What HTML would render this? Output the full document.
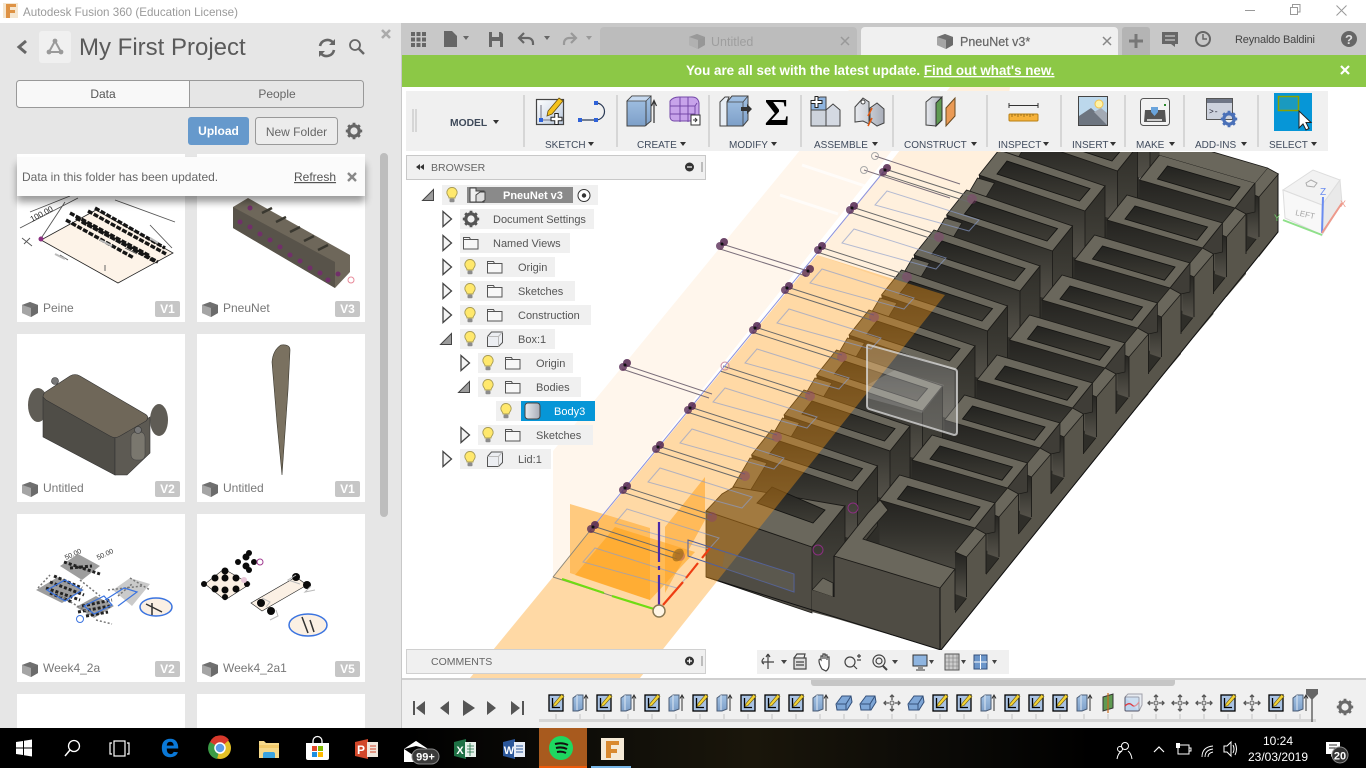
<!DOCTYPE html>
<html lang="en"><head><meta charset="utf-8"><title>Autodesk Fusion 360</title>
<style>
html,body{margin:0;padding:0;background:#fff;width:1366px;height:768px;overflow:hidden}
svg{display:block;font-family:"Liberation Sans",Arial,sans-serif}
text{white-space:pre}
</style></head><body>
<svg xmlns="http://www.w3.org/2000/svg" width="1366" height="768" viewBox="0 0 1366 768">
<defs>
<linearGradient id="fg" x1="0" y1="0" x2="0" y2="1"><stop offset="0" stop-color="#242320"/><stop offset=".35" stop-color="#33322d"/><stop offset=".7" stop-color="#47453e"/><stop offset="1" stop-color="#55524a"/></linearGradient>
<linearGradient id="hg" x1="0" y1="0" x2="0" y2="1"><stop offset="0" stop-color="#232320"/><stop offset="1" stop-color="#3e3c35"/></linearGradient>
<linearGradient id="eg" x1="0" y1="0" x2="0" y2="1"><stop offset="0" stop-color="#2f2e29"/><stop offset="1" stop-color="#4a4840"/></linearGradient>
<linearGradient id="tb" x1="0" y1="0" x2="1" y2="0"><stop offset="0" stop-color="#000"/><stop offset=".3" stop-color="#000"/><stop offset=".42" stop-color="#0d0c08"/><stop offset=".55" stop-color="#1a160b"/><stop offset=".7" stop-color="#0a0906"/><stop offset=".8" stop-color="#000"/></linearGradient>
<linearGradient id="sk" x1="0" y1="0" x2="1" y2="1"><stop offset="0" stop-color="#fff"/><stop offset="1" stop-color="#b9c8dd"/></linearGradient>
<linearGradient id="bx" x1="0" y1="0" x2="0" y2="1"><stop offset="0" stop-color="#a3c2e4"/><stop offset="1" stop-color="#7d9fc8"/></linearGradient>
<linearGradient id="gr" x1="0" y1="0" x2="1" y2="0"><stop offset="0" stop-color="#e8eaee"/><stop offset="1" stop-color="#a8adb8"/></linearGradient>

<!-- left column ring -->
<g id="L">
<polygon points="13,-16 119,20 119,70 13,34" fill="url(#fg)"/>
<polygon points="-5.5,16 11,21 11,60 -5.5,55" fill="url(#fg)" stroke="#1c1b18" stroke-width=".8"/>
<polygon points="119,20 139,-5 139,55 119,80" fill="url(#eg)" stroke="#1c1b18" stroke-width=".8"/>
<polygon points="-5.5,16 11.5,-13 28.5,-8 11,21" fill="#6a675c" stroke="#1c1b18" stroke-width=".8"/>
<polygon points="13,-16 33,-41 139,-5 119,20" fill="#6a675c" stroke="#1c1b18" stroke-width=".9"/>
<polygon points="31,-17 41,-30 124,-2.4 113.5,10" fill="url(#hg)" stroke="#141412" stroke-width=".9"/>
</g>
<!-- right column ring -->
<g id="R">
<polygon points="13,-16 108.5,12 88.5,36 88.5,75 13,40" fill="url(#fg)"/>
<polygon points="88.5,36 100,41 100,82 88.5,78" fill="url(#fg)"/>
<polygon points="108.5,12 128.5,-13 128.5,16 119.5,18" fill="#3f3d37" stroke="#1c1b18" stroke-width=".7"/>
<polygon points="100,41 119.5,18 119.5,78 100,101" fill="#58554b"/>
<path d="M100,41V81M119.5,18V58" stroke="#1c1b18" stroke-width=".9" fill="none"/>
<polygon points="13,-16 33,-41 128.5,-13 108.5,12" fill="#6a675c" stroke="#1c1b18" stroke-width=".9"/>
<polygon points="31,-17 41,-30 113.5,-9 103,4.2" fill="url(#hg)" stroke="#141412" stroke-width=".9"/>
<polygon points="108.5,12 119.5,18 100,41 88.5,36" fill="#6a675c" stroke="#1c1b18" stroke-width=".8"/>
</g>
<!-- sketch repeat -->
<g id="S" fill="none">
<line x1="0" y1="-1" x2="87" y2="27" stroke="#6a6a6a" stroke-width="1"/>
<line x1="-3" y1="4" x2="84" y2="32" stroke="#6a6a6a" stroke-width="1"/>
<polygon points="-10,35 2,21 94,50 84,61" stroke="#8a9ccc" stroke-opacity=".65" stroke-width="1"/>
<circle cx="87" cy="29" r="5" fill="#8b3f78" opacity=".4"/>
</g>
<g id="D"><circle cx="2" cy="-2" r="4" fill="#52264f" opacity=".85"/><circle cx="-2" cy="2" r="4" fill="#5a2e58" opacity=".8"/><circle r="1.5" fill="#111"/></g>

<!-- bulb -->
<g id="bulb"><path d="M0-7.5a5 5 0 0 1 4.7 7c-.8 1.6-1.7 2-1.7 3.5h-6c0-1.5-.9-1.9-1.7-3.5A5 5 0 0 1 0-7.5z" fill="#ffe86c" stroke="#a89c55" stroke-width=".9"/><rect x="-2.5" y="3.6" width="5" height="3.6" rx="1" fill="#8c8c8c"/></g>
<!-- folder -->
<g id="fo"><path d="M-7.5-5.5h6l1 2h7.5v9.5h-14.5z" fill="#f7f7f7" stroke="#555" stroke-width="1"/><path d="M-7.5-3.5h15" stroke="#555" stroke-width="1" fill="none"/></g>
<!-- tree triangles -->
<polygon id="tr" points="-4,-7.5 4.5,0 -4,7.5" fill="#f4f4f4" stroke="#444" stroke-width="1.3"/>
<polygon id="td" points="5.5,-5.5 5.5,5.5 -5.5,5.5" fill="#9c9c9c" stroke="#444" stroke-width="1"/>
<!-- component cube -->
<g id="cu"><path d="M-7.5-2.5L-3.5-7H7.5V3.5L3.5 7.5H-7.5z" fill="#eceef2" stroke="#555"/><path d="M3.5 7.5V-2.5L7.5-7M3.5-2.5H-7.5" stroke="#bbb" fill="none"/></g>
<!-- doc cube -->
<g id="dc"><polygon points="-8,-4 0,-7 8,-4 8,4 1,8 -8,4" fill="#8a8a8a"/><polygon points="-8,-4 0,-7 8,-4 1,-1" fill="#6f6f6f"/><polygon points="1,-1 8,-4 8,4 1,8" fill="#6b6b6b"/><polygon points="-8,-4 1,-1 1,8 -8,4" fill="#a5a5a5"/></g>
<!-- timeline icons -->
<g id="ts"><rect x="-7" y="-8" width="14" height="16" fill="#a9c2e2" stroke="#000" stroke-width="1.3"/><path d="M-3.5-5V4.5H4" fill="none" stroke="#000" stroke-width="1.3"/><path d="M5.5-8.5L8-6.5 0 2.5l-3 1 1-3z" fill="#f4d335" stroke="#6a5a10" stroke-width=".6"/></g>
<g id="te"><polygon points="-7,-5 -3,-8 3,-8 3,6 -2,8 -7,8" fill="url(#bx)" stroke="#4c5d75"/><path d="M-3-8V7" stroke="#dfe8f3" fill="none"/><path d="M6 8V-7M4-4.5L6-8l2 3.5" fill="none" stroke="#333"/></g>
<g id="tf"><path d="M-8 1L-2-7H7L8-1 3 7H-7z" fill="#7ea6d6" stroke="#34507a"/><path d="M-7 1H2L7-7M2 1V7" fill="none" stroke="#34507a"/></g>
<g id="tm" fill="none" stroke="#555" stroke-width="1.3"><path d="M0-8V-3M-2-6L0-8l2 2M0 8V3M-2 6L0 8l2-2M-8 0H-3M-6-2L-8 0l2 2M8 0H3M6-2L8 0 6 2"/><circle r="2" fill="#ddd" stroke="#777"/></g>
<!-- badge -->
<g id="ba"><rect x="0" y="0" width="25" height="16" rx="2" fill="#c6c6c6"/></g>
<!-- gear -->
<g id="gear"><circle r="5.2" fill="none" stroke="currentColor" stroke-width="3.2"/><g stroke="currentColor" stroke-width="2.8"><path d="M0-8.2V-5.5M0 8.2V5.5M-8.2 0H-5.5M8.2 0H5.5M-5.8-5.8L-4-4M5.8 5.8L4 4M-5.8 5.8L-4 4M5.8-5.8L4-4"/></g></g>
<clipPath id="scene"><rect x="402" y="87" width="964" height="592"/></clipPath>
<clipPath id="model"><rect x="402" y="152" width="964" height="527"/></clipPath>
<clipPath id="cards"><rect x="0" y="150" width="380" height="578"/></clipPath>
</defs>

<!-- ====== window backgrounds ====== -->
<rect width="1366" height="768" fill="#fff"/>

<!-- ====== 3D scene ====== -->
<g clip-path="url(#scene)">
<polygon points="553,451 792,160 849,90 940,90 553,577" fill="#fff6ec"/>
<polygon points="817,255 897,283 1000,155 1010,87 950,87" fill="#fff0dd"/>
<g stroke="#fff" stroke-width="3" opacity=".7"><path d="M802,165L865,186M780,195L838,214"/></g>

<!-- model -->
<g clip-path="url(#model)">
<polygon points="706,511 732,500 1057,100 1150,150 1139,180 1160,152 1172,140 1267,168 1278,174 1278,232 941,650 706,577" fill="#2f2e29"/>
<use href="#L" x="1031" y="111"/><use href="#L" x="998.5" y="151"/><use href="#L" x="966" y="191"/><use href="#L" x="933.5" y="231"/><use href="#L" x="901" y="271"/><use href="#L" x="868.5" y="311"/><use href="#L" x="836" y="351"/><use href="#L" x="803.5" y="391"/><use href="#L" x="771" y="431"/><use href="#L" x="738.5" y="471"/>
<!-- left front block -->
<polygon points="812,547 845,506 845,578 833,597 812,590" fill="url(#eg)" stroke="#1c1b18" stroke-width=".8"/>
<polygon points="812,590 823,578 833,583 833,597" fill="#6a675c" stroke="#1c1b18" stroke-width=".7"/>
<polygon points="706,511 812,547 812,613 706,577" fill="#4f4c44" stroke="#1c1b18" stroke-width=".8"/>
<polygon points="706,511 722,494 734,487 845,506 812,547" fill="#6a675c" stroke="#1c1b18" stroke-width=".9"/>
<polygon points="757,503 772,487 825,510 813,523" fill="url(#hg)" stroke="#141412" stroke-width=".9"/>

<!-- right col -->
<polygon points="958,560 1278,174 1278,232 941,650" fill="#2f2e29"/>
<polygon points="941,650 1278,232 1278,212 941,630" fill="#58554b" stroke="#1c1b18" stroke-width=".8"/>
<!-- last (back) tab -->
<polygon points="1247.5,192 1259,197 1259,240 1247.5,236" fill="url(#fg)"/>
<polygon points="1259,197 1278.5,174 1278.5,232 1259,257" fill="#58554b"/>
<path d="M1259,197V237M1278,174V232" stroke="#1c1b18" stroke-width=".9" fill="none"/>
<polygon points="1267.5,168 1278.5,174 1259,197 1247.5,192" fill="#6a675c" stroke="#1c1b18" stroke-width=".8"/>
<use href="#R" x="1126.5" y="196"/>
<polygon points="1159.5,155 1255,183 1267.5,168 1172,140 1160,140" fill="#6a675c"/>
<path d="M1267.5,168L1172,140" stroke="#1c1b18" stroke-width=".9" fill="none"/>
<use href="#R" x="1094" y="236"/><use href="#R" x="1061.5" y="276"/><use href="#R" x="1029" y="316"/><use href="#R" x="996.5" y="356"/><use href="#R" x="964" y="396"/><use href="#R" x="931.5" y="436"/><use href="#R" x="899" y="476"/><use href="#R" x="866.5" y="516"/>
<!-- right front block -->
<polygon points="940,588 955,569 955,630 941,650" fill="#58554b"/>
<path d="M955,569V610" stroke="#1c1b18" stroke-width=".9"/>
<polygon points="834,556 940,588 941,650 834,618" fill="#4f4c44"/>
<polygon points="812,590 834,597 834,618 812,612" fill="#4f4c44"/>
<polygon points="834,556 868,513 880,500 888,510 873,527 863,539 955,569 940,588" fill="#6a675c" stroke="#1c1b18" stroke-width=".9"/>
<path d="M834,556V597M940,588V650M706,577L941,650L1278,232V174" fill="none" stroke="#111" stroke-width="1"/>
</g>

<!-- orange plane -->
<polygon points="817,255 945,295 640,678 470,678 553,577" fill="#ff9c12" opacity=".38"/>
<polygon points="570,504 650,528 650,600 570,573" fill="#ffa526" opacity=".55"/>
<polygon points="575,575 615,527 695,552 650,600" fill="#ffa010" opacity=".55"/>
<polygon points="665,527 705,477 705,520 665,593" fill="#ffa526" opacity=".6"/>

<!-- sketch lines -->
<use href="#S" x="593" y="527"/><use href="#S" x="625" y="488"/><use href="#S" x="658" y="447"/><use href="#S" x="690" y="408"/><use href="#S" x="723" y="367"/><use href="#S" x="755" y="328"/><use href="#S" x="787" y="288"/><use href="#S" x="820" y="248"/><use href="#S" x="852" y="208"/><use href="#S" x="885" y="170"/>
<path d="M553,577L593,527" stroke="#8b8678" stroke-width="1" fill="none"/>
<path d="M593,527L885,170" stroke="#8a90dc" stroke-width="1" fill="none"/>
<path d="M553,577L659,611" stroke="#8b8678" stroke-width="1" fill="none"/>
<path d="M625,365L712,394M622,369L709,398M722,244L808,271M720,249L806,276M875,156L960,184M864,170L950,198" stroke="#7b6f7b" stroke-width="1" fill="none"/>
<use href="#D" x="593" y="527"/><use href="#D" x="625" y="488"/><use href="#D" x="658" y="447"/><use href="#D" x="690" y="408"/><use href="#D" x="755" y="328"/><use href="#D" x="787" y="288"/><use href="#D" x="820" y="248"/><use href="#D" x="852" y="208"/><use href="#D" x="885" y="170"/><use href="#D" x="625" y="365"/><use href="#D" x="722" y="244"/><use href="#D" x="808" y="271"/>
<circle cx="725" cy="366" r="4" fill="none" stroke="#c98aa2"/>
<circle cx="875" cy="156" r="3.5" fill="none" stroke="#aaa"/><circle cx="864" cy="170" r="3.5" fill="none" stroke="#aaa"/>
<circle cx="853" cy="508" r="5" fill="none" stroke="#8b2f80"/><circle cx="818" cy="550" r="5" fill="none" stroke="#8b2f80"/>
<polygon points="688,540 794,574 794,592 688,556" fill="none" stroke="#4f5fa0"/>
<polygon points="725,552 794,574 794,592 722,568" fill="#736f62" opacity=".35"/>
<ellipse cx="678" cy="555" rx="5" ry="7" fill="#a8701c" opacity=".8" transform="rotate(35 678 555)"/>

<!-- axes -->
<path d="M562,579L604,593" stroke="#6fdc12" stroke-width="2.2"/><path d="M612,596L654,609" stroke="#6fdc12" stroke-width="2.2"/>
<path d="M659,522V562M659,566V570M659,575V605" stroke="#4a2aa8" stroke-width="2.2"/>
<path d="M663,605L683,582M686,578L698,563M702,558L710,548" stroke="#ee3d12" stroke-width="2.2"/>
<circle cx="659" cy="611" r="6" fill="#fff6e6" stroke="#8a7a55" stroke-width="1.5"/>

<!-- selected body highlight -->
<path d="M869,345L955,369q2,1 2,3V432q0,3-3,3L869,409q-2-1-2-3V347q0-3 2-2z" fill="#fff" fill-opacity=".2" stroke="#ddd" stroke-opacity=".75" stroke-width="2"/>
<polygon points="867,398 922,413 944,385 895,370 867,385" fill="#fff" opacity=".15"/>

<!-- view cube -->
<polygon points="1283,190 1313,170 1340,180 1322,205" fill="#f2f2f2" stroke="#ddd"/>
<polygon points="1283,190 1322,205 1322,235 1285,218" fill="#f8f8f8" stroke="#ddd"/>
<polygon points="1322,205 1340,180 1342,203 1322,235" fill="#e9e9e9" stroke="#ddd"/>
<text x="1295" y="215" font-size="8" fill="#a5a5a5" transform="rotate(12 1295 215)">LEFT</text>
<path d="M1306,183l5-3 6,3-3,4-7-1z" fill="none" stroke="#aaa"/>
<path d="M1323,197L1322,233" stroke="#6a8cf0" stroke-width="2"/><path d="M1322,233L1342,203" stroke="#ee9a8c" stroke-width="2"/><path d="M1322,235L1283,220" stroke="#8fe08a" stroke-width="2"/>
<text x="1320" y="195" font-size="10" fill="#6a8cf0">Z</text><text x="1340" y="207" font-size="9" fill="#ee9a8c">X</text><text x="1274" y="221" font-size="9" fill="#6fd06a">Y</text>
</g>

<!-- ====== left panel ====== -->
<rect x="0" y="23" width="401" height="705" fill="#e6e6e6"/>
<rect x="401" y="23" width="1" height="705" fill="#c8c8c8"/>
<path d="M26,41l-7,6 7,6" fill="none" stroke="#666" stroke-width="3"/>
<rect x="39" y="31" width="32" height="32" rx="3" fill="#f0f0f0"/>
<path d="M55,41l-6,11h12z" fill="none" stroke="#9a9a9a" stroke-width="2"/><circle cx="55" cy="41" r="2.4" fill="#9a9a9a"/><circle cx="49" cy="52" r="2.4" fill="#9a9a9a"/><circle cx="61" cy="52" r="2.4" fill="#9a9a9a"/>
<text x="79" y="55" font-size="24" fill="#5a5a5a">My First Project</text>
<path d="M320,46a7.5 7.5 0 0 1 13-3.5M334,50a7.5 7.5 0 0 1-13 3.5" fill="none" stroke="#666" stroke-width="2.6"/><path d="M335,39v6h-6zM319,57v-6h6z" fill="#666"/>
<circle cx="355" cy="45" r="5" fill="none" stroke="#666" stroke-width="1.8"/><path d="M359,49l5,5" stroke="#666" stroke-width="2.4"/>
<path d="M382,30l8,8M390,30l-8,8" stroke="#ababab" stroke-width="2.6"/>

<rect x="16.500" y="80.500" width="347" height="27" rx="3" fill="#e6e6e6" stroke="#999"/>
<path d="M189.500,81H20a3 3 0 0 0-3 3V104a3 3 0 0 0 3 3H189.500z" fill="#f8f8f8" stroke="none"/>
<path d="M189.500,80.500V107.500" stroke="#999"/>
<text x="103" y="98" font-size="12" fill="#555" text-anchor="middle">Data</text>
<text x="277" y="98" font-size="12" fill="#666" text-anchor="middle">People</text>
<rect x="188" y="117" width="61" height="28" rx="3" fill="#6699cc"/>
<text x="218.500" y="135" font-size="12" font-weight="bold" fill="#fff" text-anchor="middle">Upload</text>
<rect x="255.500" y="117.500" width="82" height="27" rx="3" fill="#ececec" stroke="#999"/>
<text x="296.500" y="136" font-size="12" fill="#666" text-anchor="middle">New Folder</text>
<use href="#gear" x="354" y="131" color="#666"/>

<!-- cards -->
<g clip-path="url(#cards)">
<rect x="17" y="154" width="168" height="168" fill="#fff"/><rect x="197" y="154" width="168" height="168" fill="#fff"/>
<rect x="17" y="334" width="168" height="168" fill="#fff"/><rect x="197" y="334" width="168" height="168" fill="#fff"/>
<rect x="17" y="514" width="168" height="168" fill="#fff"/><rect x="197" y="514" width="168" height="168" fill="#fff"/>
<rect x="17" y="694" width="168" height="40" fill="#fff"/><rect x="197" y="694" width="168" height="40" fill="#fff"/>

<!-- Peine thumb -->
<polygon points="41,240 118,283 173,253 96,210" fill="#fdf3e8" stroke="#222" stroke-width=".8"/>
<g stroke="#151515" stroke-width="3.4" stroke-dasharray="5 1.5" fill="none"><path d="M70,213L150,256M76,218L156,262M82,222L158,262M66,220L134,258M88,211L166,254M95,208L165,248"/></g>
<g stroke="#555" stroke-width=".9" fill="none"><path d="M20,228L78,198M40,240L65,202M30,212L70,196M115,200L175,222M150,225L172,248"/><path d="M22,238l10,8M24,244l6-6M60,255l8,5M105,265v6M125,248l12,6"/></g>
<g stroke="#bbb" stroke-width="2" fill="none"><path d="M55,254l10,5M100,240l12,6M150,238l8,5"/></g>
<circle cx="41" cy="239" r="2.5" fill="#8b2f80"/>
<text x="32" y="222" font-size="8" fill="#222" transform="rotate(-28 32 222)">100.00</text>
<!-- PneuNet thumb -->
<polygon points="233,207 248,198 350,255 350,272 335,288 233,228" fill="#6e675a"/>
<polygon points="233,207 335,262 335,288 233,228" fill="#58534a"/>
<g fill="#71306a"><circle cx="240" cy="222" r="2.5"/><circle cx="250" cy="227" r="2.5"/><circle cx="260" cy="234" r="2.5"/><circle cx="270" cy="240" r="2.5"/><circle cx="280" cy="247" r="2.5"/><circle cx="290" cy="255" r="2.5"/><circle cx="300" cy="261" r="2.5"/><circle cx="310" cy="268" r="2.5"/><circle cx="320" cy="273" r="2.5"/><circle cx="328" cy="280" r="2.5"/><circle cx="338" cy="274" r="2.5"/><circle cx="250" cy="208" r="2.5"/></g>
<g stroke="#3a3830" stroke-width="2.5"><path d="M262,213l10-5M276,222l10-5M290,232l10-5M304,241l10-5M318,250l10-5"/></g>
<circle cx="351" cy="280" r="3" fill="none" stroke="#e88a9a"/>
<!-- Untitled box -->
<ellipse cx="38" cy="405" rx="10" ry="17" fill="#5f5c55"/><ellipse cx="159" cy="420" rx="9" ry="16" fill="#5f5c55"/>
<polygon points="43,397 115,438 115,475 43,437" fill="#4f4d47" stroke="#333" stroke-width=".6"/>
<polygon points="115,438 150,417 150,453 127,475 115,475" fill="#5d5a53" stroke="#333" stroke-width=".6"/>
<path d="M43,397Q43,393 47,391L70,376Q75,373 80,376L145,414Q150,417 146,421L120,436Q115,439 110,436L46,400z" fill="#6f6759" stroke="#333" stroke-width=".6"/>
<rect x="131" y="432" width="14" height="28" rx="5" fill="#7a776e" stroke="#444" stroke-width=".6"/>
<circle cx="55" cy="381" r="3.500" fill="#777" stroke="#333" stroke-width=".6"/><circle cx="138" cy="430" r="3.500" fill="#777" stroke="#333" stroke-width=".6"/>
<!-- blade -->
<path d="M281,345Q290,344 290,350L288,390L282,475L277,423L272,362Q273,350 281,345z" fill="#7a7160" stroke="#3a382f" stroke-width=".6"/>
<!-- Week4_2a -->
<g fill="#7d7d7d" opacity=".75"><polygon points="36,590 58,577 84,590 62,603"/><polygon points="60,566 78,554 100,566 82,580"/><polygon points="76,607 96,596 114,606 94,618"/><polygon points="113,590 130,578 150,584 132,606" opacity=".55"/></g>
<g fill="none">
<g stroke="#222" stroke-width="3" stroke-dasharray="3 2"><path d="M46,588L80,600M50,582L84,595M54,576L82,588M50,593L72,602M78,612L110,606M82,606L112,600M86,616L108,612M64,562L100,574M70,568L92,566"/></g>
<g stroke="#777" stroke-width="1.5" stroke-dasharray="2 2"><path d="M38,588L50,575M60,596L88,612M80,580L100,596M130,578L150,590M108,590L142,586M118,596L132,584M96,620L112,624"/></g>
<path d="M47,590L65,580 82,590 65,601zM84,606L104,596 112,605 94,614zM105,600L124,588 137,592 118,606" stroke="#3b74e0" stroke-width="1.2"/>
</g>
<text x="66" y="560" font-size="7" fill="#333" transform="rotate(-25 66 560)">50.00</text><text x="98" y="560" font-size="7" fill="#333" transform="rotate(-25 98 560)">50.00</text>
<ellipse cx="156" cy="607" rx="16" ry="9" fill="#fbf0e4" stroke="#3b74e0" stroke-width="1.500"/><path d="M146,604l16,8M152,603l0,12" stroke="#333" stroke-width="1.500"/>
<circle cx="80" cy="619" r="3.500" fill="none" stroke="#3b74e0"/>
<!-- Week4_2a1 -->
<polygon points="205,584 224,569 250,584 225,600" fill="#fbf0e4" stroke="#222" stroke-width=".6"/>
<polygon points="251,603 296,577 307,585 262,611" fill="#fbf0e4" stroke="#222" stroke-width=".6"/>
<g fill="#0a0a0a"><circle cx="204" cy="584" r="3"/><circle cx="215" cy="578" r="3.500"/><circle cx="215" cy="589" r="3.500"/><circle cx="225" cy="571" r="3.500"/><circle cx="225" cy="578" r="3.500"/><circle cx="236" cy="578" r="3.500"/><circle cx="236" cy="589" r="3.500"/><circle cx="225" cy="590" r="3.500"/><circle cx="225" cy="597" r="3"/><circle cx="247" cy="584" r="3"/><circle cx="238" cy="562" r="3"/><circle cx="246" cy="557" r="3.500"/><circle cx="246" cy="566" r="3.500"/><circle cx="254" cy="562" r="3"/><circle cx="249" cy="553" r="3"/><circle cx="249" cy="570" r="3"/><circle cx="261" cy="603" r="4"/><circle cx="271" cy="611" r="4"/><circle cx="296" cy="577" r="4"/><circle cx="307" cy="585" r="4"/></g>
<circle cx="260" cy="562" r="3" fill="none" stroke="#a03a90"/><circle cx="244" cy="580" r="3" fill="#e8c6d8"/>
<ellipse cx="308" cy="625" rx="19" ry="11" fill="#fbf0e4" stroke="#3b74e0" stroke-width="1.500"/><path d="M302,617l6,16M310,620l4,12" stroke="#333" stroke-width="1.500"/>
<g stroke="#bbb" fill="none" stroke-width="1"><path d="M300,584l-12-4 8-5M315,590l-10 2 6-6M270,620l8-4-2-6M262,598l8,4-4,5"/></g>

<!-- card labels -->
<use href="#dc" x="30" y="309"/><text x="43" y="312" font-size="12" fill="#777">Peine</text><use href="#ba" x="155" y="301"/><text x="167.500" y="313" font-size="12" font-weight="bold" fill="#fff" text-anchor="middle">V1</text>
<use href="#dc" x="210" y="309"/><text x="223" y="312" font-size="12" fill="#777">PneuNet</text><use href="#ba" x="335" y="301"/><text x="347.500" y="313" font-size="12" font-weight="bold" fill="#fff" text-anchor="middle">V3</text>
<use href="#dc" x="30" y="489"/><text x="43" y="492" font-size="12" fill="#777">Untitled</text><use href="#ba" x="155" y="481"/><text x="167.500" y="493" font-size="12" font-weight="bold" fill="#fff" text-anchor="middle">V2</text>
<use href="#dc" x="210" y="489"/><text x="223" y="492" font-size="12" fill="#777">Untitled</text><use href="#ba" x="335" y="481"/><text x="347.500" y="493" font-size="12" font-weight="bold" fill="#fff" text-anchor="middle">V1</text>
<use href="#dc" x="30" y="669"/><text x="43" y="672" font-size="12" fill="#777">Week4_2a</text><use href="#ba" x="155" y="661"/><text x="167.500" y="673" font-size="12" font-weight="bold" fill="#fff" text-anchor="middle">V2</text>
<use href="#dc" x="210" y="669"/><text x="223" y="672" font-size="12" fill="#777">Week4_2a1</text><use href="#ba" x="335" y="661"/><text x="347.500" y="673" font-size="12" font-weight="bold" fill="#fff" text-anchor="middle">V5</text>
</g>
<rect x="380" y="153" width="8" height="364" rx="4" fill="#bdbdbd"/>

<!-- notification -->
<rect x="17" y="164" width="348" height="38" fill="#000" opacity=".4" style="filter:blur(4px)"/>
<rect x="17" y="157" width="348" height="39" fill="#fbfbfb"/>
<text x="22" y="181" font-size="12" fill="#666">Data in this folder has been updated.</text>
<text x="294" y="181" font-size="12" fill="#555" text-decoration="underline">Refresh</text>
<path d="M348,173l8,8M356,173l-8,8" stroke="#888" stroke-width="2.400"/>

<!-- ====== title bar ====== -->
<rect x="0" y="0" width="1366" height="23" fill="#fff"/>
<rect x="3" y="3" width="15" height="15" fill="#f5e6cf"/>
<path d="M6,4h10v3h-6v3h5v3h-5v5h-4z" fill="#d9822b" opacity=".85"/>
<text x="23" y="16" font-size="12" fill="#9a9a9a" textLength="215" lengthAdjust="spacingAndGlyphs">Autodesk Fusion 360 (Education License)</text>
<path d="M1245,10.500h10" stroke="#999"/>
<rect x="1290.500" y="7.500" width="7" height="7" fill="#fff" stroke="#999"/><path d="M1292.500,7V4.500H1300V12H1298" fill="none" stroke="#999"/>
<path d="M1336.500,5.500l10,10M1346.500,5.500l-10,10" stroke="#999"/>

<!-- ====== tab bar ====== -->
<rect x="402" y="23" width="964" height="32" fill="#c8c8c8"/>
<g fill="#666"><rect x="411" y="32" width="4" height="4"/><rect x="416.500" y="32" width="4" height="4"/><rect x="422" y="32" width="4" height="4"/><rect x="411" y="37.500" width="4" height="4"/><rect x="416.500" y="37.500" width="4" height="4"/><rect x="422" y="37.500" width="4" height="4"/><rect x="411" y="43" width="4" height="4"/><rect x="416.500" y="43" width="4" height="4"/><rect x="422" y="43" width="4" height="4"/></g>
<path d="M444,31h8l5,5v11h-13z" fill="#666"/><path d="M463,36h6l-3,4z" fill="#666"/>
<path d="M489,32h12l2,2v13h-14z" fill="#666"/><rect x="492" y="32" width="7" height="5" fill="#c8c8c8"/><rect x="492" y="41" width="8" height="6" fill="#c8c8c8"/>
<path d="M524,33l-5,5 5,5M519,38h9a5 5 0 0 1 5 5v2" fill="none" stroke="#666" stroke-width="2.200"/><path d="M544,36h6l-3,4z" fill="#666"/>
<path d="M571,33l5,5-5,5M576,38h-7a5 5 0 0 0-5 5v2" fill="none" stroke="#999" stroke-width="2.200"/><path d="M586,36h6l-3,4z" fill="#999"/>
<path d="M600,55V31a4 4 0 0 1 4-4H853a4 4 0 0 1 4 4V55z" fill="#bcbcbc"/>
<use href="#dc" x="697" y="41" opacity=".45"/>
<text x="711" y="46" font-size="12.500" fill="#9e9e9e">Untitled</text>
<path d="M841,37l8,8M849,37l-8,8" stroke="#999" stroke-width="1.500"/>
<path d="M861,55V31a4 4 0 0 1 4-4H1114a4 4 0 0 1 4 4V55z" fill="#f0f0f0"/>
<use href="#dc" x="945" y="41"/>
<text x="960" y="46" font-size="12.500" fill="#666" stroke="#666" stroke-width=".2">PneuNet v3*</text>
<path d="M1103,37l8,8M1111,37l-8,8" stroke="#888" stroke-width="1.500"/>
<path d="M1122,55V30a3 3 0 0 1 3-3h22a3 3 0 0 1 3 3V55z" fill="#b4b4b4"/>
<path d="M1136,34v14M1129,41h14" stroke="#777" stroke-width="3"/>
<path d="M1162,32h16v12h-3v3l-4-3h-9z" fill="#666"/><path d="M1165,36h10M1165,40h10" stroke="#ddd"/>
<circle cx="1203" cy="39" r="7" fill="none" stroke="#666" stroke-width="2"/><path d="M1203,34v5h4" fill="none" stroke="#666" stroke-width="1.500"/>
<text x="1235" y="43" font-size="11" fill="#444" textLength="80">Reynaldo Baldini</text>
<circle cx="1349" cy="39" r="8" fill="#666"/><text x="1349" y="44" font-size="13" font-weight="bold" fill="#ddd" text-anchor="middle">?</text>

<!-- banner -->
<rect x="402" y="55" width="964" height="32" fill="#8cc846"/>
<text x="686" y="75" font-size="13.400" font-weight="bold" fill="#fff">You are all set with the latest update. <tspan text-decoration="underline">Find out what's new.</tspan></text>
<path d="M1341,66l8,8M1349,66l-8,8" stroke="#fff" stroke-width="2.200"/>

<!-- ====== toolbar ====== -->
<rect x="406" y="91" width="922" height="60" fill="#f0f0f0"/>
<path d="M413,109v23M416,109v23" stroke="#bdbdbd"/>
<text x="450" y="126" font-size="10.300" font-weight="bold" fill="#3f4a5a">MODEL</text><path d="M493,120h6l-3,4z" fill="#333"/>
<g stroke="#d6d6d6" stroke-width="2"><path d="M524,95v52M617,95v52M709,95v52M801,95v52M893,95v52M987,95v52M1061,95v52M1125,95v52M1184,95v52M1258,95v52"/></g>
<g font-size="10" fill="#3f4a5c">
<text x="545" y="148">SKETCH</text><text x="637" y="148">CREATE</text><text x="729" y="148">MODIFY</text><text x="814" y="148">ASSEMBLE</text><text x="904" y="148">CONSTRUCT</text><text x="998" y="148">INSPECT</text><text x="1072" y="148">INSERT</text><text x="1136" y="148">MAKE</text><text x="1195" y="148">ADD-INS</text><text x="1269" y="148">SELECT</text>
</g>
<g fill="#333"><path d="M588,142h6l-3,4zM680,142h6l-3,4zM771,142h6l-3,4zM872,142h6l-3,4zM971,142h6l-3,4zM1043,142h6l-3,4zM1110,142h6l-3,4zM1169,142h6l-3,4zM1241,142h6l-3,4zM1311,142h6l-3,4z"/></g>

<!-- sketch icon -->
<rect x="536.500" y="99.500" width="27" height="25" fill="url(#sk)" stroke="#444" stroke-width="1.200"/>
<path d="M541,105V120H556" fill="none" stroke="#556" stroke-width=".8"/><rect x="539" y="118" width="4" height="4" fill="#2f62d8"/>
<path d="M559,98l4,3-11,13-5,2 1-5z" fill="#f4c21c" stroke="#6a5010" stroke-width=".8"/>
<path d="M556.500,113v12M550.500,119h12" stroke="#222" stroke-width="4.500"/><path d="M556.500,114v10M551.500,119h10" stroke="#fff" stroke-width="2.500"/>
<!-- curve -->
<path d="M580,120H596a8.500 8.500 0 0 0 0-17" fill="none" stroke="#2b3a55" stroke-width="1.200"/><rect x="578" y="118" width="4" height="4" fill="#2f62d8"/><rect x="594" y="118" width="4" height="4" fill="#2f62d8"/><rect x="594" y="101" width="4" height="4" fill="#2f62d8"/>
<!-- extrude -->
<polygon points="627,101 632,96 651,96 651,121 645,126 627,126" fill="url(#bx)" stroke="#444"/><polygon points="627,101 632,96 651,96 646,101" fill="#c6d9ef" stroke="#444" stroke-width=".7"/><path d="M646,101V126" stroke="#444"/>
<path d="M654,123V102M651.500,106L654,100.500 656.500,106" fill="none" stroke="#333" stroke-width="1.200"/>
<!-- mesh -->
<path d="M670,101q3-4 9-4h13q6 0 7 6v14q0 4-3 4h-22a4 4 0 0 1-4-4z" fill="#c7a3ea" stroke="#7448a8"/>
<path d="M670,106H695V122M680,97V122M688,97V122M670,114H695M697,103l-2,3" fill="none" stroke="#7448a8"/>
<rect x="691" y="115" width="9" height="10" fill="#fff" stroke="#333"/><path d="M693,120h4M695,118l2,2-2,2" fill="none" stroke="#333"/>
<!-- press pull -->
<path d="M720,102l5-5h4l-2 5v24h-7z" fill="#e7edf4" stroke="#444"/>
<polygon points="727,102 732,96 748,96 748,120 743,126 727,126" fill="url(#bx)" stroke="#444"/><path d="M743,126V102H727M743,102l5-6" fill="none" stroke="#444" stroke-width=".8"/>
<path d="M741,107h6v-3l5,5-5,5v-3h-6z" fill="#333"/>
<!-- sigma -->
<text x="777" y="125" font-size="38" font-family="Liberation Serif" font-weight="bold" fill="#000" text-anchor="middle">Σ</text>
<!-- assemble -->
<polygon points="811,110 826,110 826,126 811,126" fill="#cdd3dc" stroke="#444"/><polygon points="826,110 833,104 840,110 840,126 826,126" fill="#d4d9e2" stroke="#444"/>
<polygon points="811,102 820,97 826,97 826,110 811,110" fill="#8fb5e0" stroke="#444"/>
<path d="M816.500,96v12M810.500,102h12" stroke="#222" stroke-width="4"/><path d="M816.500,97v10M811.500,102h10" stroke="#fff" stroke-width="2"/>
<!-- joint -->
<path d="M855,122V107l8-9 6,4v22l-6-3zM870,108l7-5 7,6v14l-7,3-7-5z" fill="url(#gr)" stroke="#444"/><path d="M872,108l-4,8M872,118l-4,8" stroke="#e05a14" stroke-width="1.600"/><circle cx="863" cy="102" r="2" fill="#fff" stroke="#444"/>
<!-- construct -->
<polygon points="926,102 932,97 942,97 942,120 936,126 926,125" fill="url(#gr)" stroke="#444"/>
<polygon points="936,103 942,97 942,120 936,126" fill="#5f9a52" stroke="#333"/>
<polygon points="946,108 955,98 955,116 946,126" fill="#ea9a55" stroke="#6a4a20"/>
<!-- inspect -->
<path d="M1009,103v5M1038,103v5M1009,105.500h29" stroke="#333" fill="none"/>
<rect x="1009" y="114" width="29" height="7" rx="1" fill="#f6b23a" stroke="#b88015"/>
<path d="M1012,114v3M1015,114v2M1018,114v3M1021,114v2M1024,114v3M1027,114v2M1030,114v3M1033,114v2" stroke="#7c5a10" stroke-width=".7"/>
<!-- insert -->
<rect x="1078.500" y="96.500" width="29" height="29" fill="#bcd8ec" stroke="#444"/>
<polygon points="1079,125 1079,116 1091,108 1107,122 1107,125" fill="#6d7580"/><polygon points="1094,112 1101,108 1107,113 1107,125" fill="#a3aab4"/>
<circle cx="1099" cy="104" r="4" fill="#fff3a6" stroke="#f2c24d"/>
<!-- make -->
<rect x="1140.500" y="98.500" width="29" height="27" rx="3" fill="#f3f3f3" stroke="#555"/>
<polygon points="1145,110 1165,110 1166,122 1144,122" fill="#555"/><polygon points="1151,107 1158,107 1158,112 1154.500,116 1151,112" fill="#6aa4dc"/><path d="M1147,120h15" stroke="#ccc" stroke-width="2"/><rect x="1164" y="104" width="2" height="2" fill="#2a8a2a"/>
<!-- add-ins -->
<rect x="1206.500" y="98.500" width="26" height="21" fill="#cdd2dd" stroke="#555"/><rect x="1207" y="99" width="25" height="4" fill="#6f7686"/>
<text x="1209" y="114" font-size="8" fill="#223" font-family="Liberation Mono">&gt;-</text>
<use href="#gear" x="1229" y="119" color="#4a70b8"/>
<!-- select -->
<rect x="1274" y="93" width="38" height="38" fill="#0696d7"/>
<rect x="1278.500" y="96.500" width="20" height="14" fill="#1a9abf" stroke="#8aa100" stroke-width="1.500"/>
<path d="M1299,111v17l4-4 3,6 3-1.500-3-6h5z" fill="#fff" stroke="#222"/>

<!-- ====== browser ====== -->
<rect x="406.500" y="155.500" width="299" height="24" fill="#f0f0f0" stroke="#c8c8c8"/>
<path d="M416,167l4-3v6zM420,167l4-3v6z" fill="#333"/>
<text x="431" y="171" font-size="10.500" fill="#666">BROWSER</text>
<circle cx="689.500" cy="167" r="4.500" fill="#333"/><path d="M687,167h5" stroke="#fff" stroke-width="1.200"/><path d="M702,162v10" stroke="#888"/>

<g fill="#f0f0f0">
<rect x="442" y="185" width="156" height="20"/><rect x="460" y="209" width="134" height="20"/><rect x="460" y="233" width="110" height="20"/><rect x="460" y="257" width="95" height="20"/><rect x="460" y="281" width="115" height="20"/><rect x="460" y="305" width="131" height="20"/><rect x="460" y="329" width="95" height="20"/><rect x="478" y="353" width="95" height="20"/><rect x="478" y="377" width="103" height="20"/><rect x="496" y="401" width="99" height="20"/><rect x="478" y="425" width="115" height="20"/><rect x="460" y="449" width="91" height="20"/>
</g>
<rect x="467" y="187" width="106" height="16" fill="#8a8a8a"/>
<rect x="521" y="401" width="74" height="20" fill="#0696d7"/>
<use href="#td" x="428" y="195"/>
<use href="#bulb" x="452" y="195"/>
<g transform="translate(477 195)"><path d="M-7-7h6v3h8v11h-14z" fill="#f0f0f0" stroke="#444"/><path d="M-1 0l4-3h5v8l-3 2h-6z" fill="#ddd" stroke="#444"/></g>
<text x="503" y="199" font-size="11" font-weight="bold" fill="#fff">PneuNet v3</text>
<circle cx="584" cy="195.500" r="6" fill="#fff" stroke="#333"/><circle cx="584" cy="195.500" r="2.200" fill="#333"/>
<g font-size="11" fill="#555">
<use href="#tr" x="447" y="219"/><use href="#gear" x="471" y="219" color="#555"/><text x="493" y="223">Document Settings</text>
<use href="#tr" x="447" y="243"/><use href="#fo" x="471" y="243"/><text x="493" y="247">Named Views</text>
<use href="#tr" x="447" y="267"/><use href="#bulb" x="470" y="267"/><use href="#fo" x="495" y="267"/><text x="518" y="271">Origin</text>
<use href="#tr" x="447" y="291"/><use href="#bulb" x="470" y="291"/><use href="#fo" x="495" y="291"/><text x="518" y="295">Sketches</text>
<use href="#tr" x="447" y="315"/><use href="#bulb" x="470" y="315"/><use href="#fo" x="495" y="315"/><text x="518" y="319">Construction</text>
<use href="#td" x="446" y="339"/><use href="#bulb" x="470" y="339"/><use href="#cu" x="495" y="339"/><text x="518" y="343">Box:1</text>
<use href="#tr" x="465" y="363"/><use href="#bulb" x="488" y="363"/><use href="#fo" x="513" y="363"/><text x="536" y="367">Origin</text>
<use href="#td" x="464" y="387"/><use href="#bulb" x="488" y="387"/><use href="#fo" x="513" y="387"/><text x="536" y="391">Bodies</text>
<use href="#bulb" x="506" y="411"/><rect x="525" y="403" width="15" height="16" rx="3" fill="url(#gr)" stroke="#444"/><text x="554" y="415" fill="#fff">Body3</text>
<use href="#tr" x="465" y="435"/><use href="#bulb" x="488" y="435"/><use href="#fo" x="513" y="435"/><text x="536" y="439">Sketches</text>
<use href="#tr" x="447" y="459"/><use href="#bulb" x="470" y="459"/><use href="#cu" x="495" y="459"/><text x="518" y="463">Lid:1</text>
</g>

<!-- comments -->
<rect x="406.500" y="649.500" width="299" height="24" fill="#f0f0f0" stroke="#d0d0d0"/>
<text x="431" y="665" font-size="10.500" fill="#666">COMMENTS</text>
<circle cx="689.500" cy="661" r="4.500" fill="#333"/><path d="M687,661h5M689.500,658.500v5" stroke="#fff" stroke-width="1.200"/><path d="M702,656v10" stroke="#888"/>

<!-- nav bar -->
<rect x="757" y="650" width="252" height="24" fill="#f0f0f0"/>
<g fill="none" stroke="#444" stroke-width="1.200">
<path d="M768,654v15M762,662h12M768,654l-2,3M768,654l2,3M764,658q-4 4 0 6"/>
<rect x="794" y="658" width="12" height="11" fill="#ddd"/><path d="M794,658l3-4h8l-1 4M796,662h8M796,665h8"/>
<path d="M822,669q-3-5-3-8t2-1v-4t2 0v3-5t2 0v5-4t2 0v5-3t2 0v8q0 4-3 6z" fill="#fff"/>
<circle cx="850" cy="662" r="5"/><path d="M854,666l3,3M857,656h4M859,654v4M857,660h4"/>
<circle cx="879" cy="661" r="6"/><circle cx="879" cy="661" r="3"/><path d="M883,666l4,4" stroke-width="2"/>
</g>
<path d="M781,660h6l-3,4zM892,660h6l-3,4zM929,660h5l-2.500,4zM961,660h5l-2.500,4zM992,660h5l-2.500,4z" fill="#444"/>
<rect x="913" y="655" width="14" height="11" fill="#8fb5e0" stroke="#333"/>
<path d="M918,668h5M916,670h9" stroke="#333"/>
<g><rect x="945" y="654" width="14" height="16" fill="#ccc" stroke="#555"/><path d="M945,658h14M945,662h14M945,666h14M949,654v16M953,654v16M957,654v16" stroke="#777" stroke-width=".6"/></g>
<rect x="974" y="655" width="13" height="14" fill="#6b95c9" stroke="#34507a"/><path d="M974,662h13M980.500,655v14" stroke="#fff"/>

<!-- ====== timeline ====== -->
<rect x="402" y="678" width="964" height="50" fill="#f0f0f0"/>
<rect x="402" y="678" width="964" height="2" fill="#cfcfcf"/>
<path d="M811,680H1175v3a3 3 0 0 1-3 3H814a3 3 0 0 1-3-3z" fill="#c6c6c6"/>
<g fill="#555"><rect x="413" y="701" width="2" height="14"/><path d="M425,701v14l-9-7zM449,701v14l-9-7zM463,700l12,8-12,8zM487,701l9,7-9,7zM511,701l9,7-9,7z"/><rect x="522" y="701" width="2" height="14"/></g>
<rect x="539" y="719" width="777" height="3" fill="#d6d6d6"/>
<path stroke="#c4c4c4" d="M556,714v5M580,714v5M604,714v5M628,714v5M652,714v5M676,714v5M700,714v5M724,714v5M748,714v5M772,714v5M796,714v5M820,714v5M844,714v5M868,714v5M892,714v5M916,714v5M940,714v5M964,714v5M988,714v5M1012,714v5M1036,714v5M1060,714v5M1084,714v5M1108,714v5M1132,714v5M1156,714v5M1180,714v5M1204,714v5M1228,714v5M1252,714v5M1276,714v5M1300,714v5"/>
<use href="#ts" x="556" y="703"/><use href="#te" x="580" y="703"/><use href="#ts" x="604" y="703"/><use href="#te" x="628" y="703"/><use href="#ts" x="652" y="703"/><use href="#te" x="676" y="703"/><use href="#ts" x="700" y="703"/><use href="#te" x="724" y="703"/><use href="#ts" x="748" y="703"/><use href="#ts" x="772" y="703"/><use href="#ts" x="796" y="703"/><use href="#te" x="820" y="703"/><use href="#tf" x="844" y="703"/><use href="#tf" x="868" y="703"/><use href="#tm" x="892" y="703"/><use href="#tf" x="916" y="703"/><use href="#ts" x="940" y="703"/><use href="#ts" x="964" y="703"/><use href="#te" x="988" y="703"/><use href="#ts" x="1012" y="703"/><use href="#ts" x="1036" y="703"/><use href="#ts" x="1060" y="703"/><use href="#te" x="1084" y="703"/>
<g><polygon points="1103,697 1113,694 1113,708 1103,711" fill="#5f9a52" stroke="#333"/><path d="M1108,693v20" stroke="#c96a1c" stroke-width="1.200"/></g>
<g><rect x="1125" y="697" width="14" height="14" rx="1" fill="#bcd4ee" stroke="#556"/><path d="M1125,706q4-4 7-1t7-3" fill="none" stroke="#e0393e" stroke-width="1.300"/><path d="M1125,697l3-3h14v11l-3 6" fill="#dfe8f3" stroke="#556" opacity=".5"/></g>
<use href="#tm" x="1156" y="703"/><use href="#tm" x="1180" y="703"/><use href="#tm" x="1204" y="703"/><use href="#ts" x="1228" y="703"/><use href="#tm" x="1252" y="703"/><use href="#ts" x="1276" y="703"/><use href="#te" x="1300" y="703"/>
<path d="M1306,689h12v5l-6,6-6-6z" fill="#666"/><path d="M1312,698v24" stroke="#666" stroke-width="1.500"/>
<use href="#gear" x="1345" y="707" color="#6a6a6a"/>

<!-- ====== taskbar ====== -->
<rect x="0" y="728" width="1366" height="40" fill="url(#tb)"/>
<g fill="#fff"><polygon points="16,742 23,741 23,747.500 16,747.500"/><polygon points="24,740.800 32,739.500 32,747.500 24,747.500"/><polygon points="16,748.500 23,748.500 23,755 16,754"/><polygon points="24,748.500 32,748.500 32,756.500 24,755.200"/></g>
<circle cx="74" cy="746" r="5.500" fill="none" stroke="#fff" stroke-width="1.300"/><path d="M70,750l-5,6" stroke="#fff" stroke-width="1.500"/>
<g fill="none" stroke="#fff" stroke-width="1.200"><rect x="114" y="741" width="11" height="15"/><path d="M112,743h-2v11h2M127,743h2v11h-2"/></g>
<text x="170" y="757" font-size="34" font-weight="bold" fill="#0a78d7" text-anchor="middle">e</text>
<circle cx="220" cy="748" r="11" fill="#e2c026"/><path d="M220,748L210,742a11 11 0 0 1 19-2z" fill="#d8392c"/><path d="M220,748l-10-6a11 11 0 0 0 7 17z" fill="#3b9c46"/><circle cx="220" cy="748" r="5" fill="#5a9be8" stroke="#fff" stroke-width="1.500"/>
<path d="M259,741h5l2,2h13v15h-20z" fill="#f6d98a"/><rect x="259" y="745" width="20" height="3" fill="#f2ca6a"/><path d="M263,758v-4q0-2 2-2h8q2 0 2 2v4z" fill="#3aa3e0"/>
<path d="M306,743h23v15a2 2 0 0 1-2 2h-19a2 2 0 0 1-2-2z" fill="#fff"/><path d="M313,743v-2a4.500 4.500 0 0 1 9 0v2" fill="none" stroke="#fff" stroke-width="1.300"/><rect x="312" y="746" width="5" height="5" fill="#e2492b"/><rect x="318" y="746" width="5" height="5" fill="#7fba00"/><rect x="312" y="752" width="5" height="5" fill="#1f8fe0"/><rect x="318" y="752" width="5" height="5" fill="#ffb900"/>
<polygon points="355,742 368,739 368,759 355,756" fill="#d2472a"/><rect x="367" y="742" width="11" height="15" fill="#f0e6dc"/><path d="M370,746h6M370,749h6M370,752h6" stroke="#d2472a"/><text x="361" y="754" font-size="12" font-weight="bold" fill="#fff" text-anchor="middle">P</text>
<path d="M404,749L416,741l12,8v13H404z" fill="#fff"/><path d="M404,749l12,8 12-8-12-6z" fill="#000"/><path d="M404,749l12-8 12,8-12-3z" fill="#fff"/>
<rect x="412" y="749" width="27" height="15" rx="7.500" fill="#3a3a3a" stroke="#888"/><text x="425.500" y="760.500" font-size="11" font-weight="bold" fill="#fff" text-anchor="middle">99+</text>
<polygon points="454,742 466,739 466,759 454,756" fill="#1e7145"/><rect x="465" y="742" width="11" height="15" fill="#e6f1ea"/><path d="M467,746h7M467,749h7M467,752h7M470,743v13" stroke="#1e7145" stroke-width=".8"/><text x="460" y="754" font-size="11" font-weight="bold" fill="#fff" text-anchor="middle">X</text>
<polygon points="503,742 515,739 515,759 503,756" fill="#2b579a"/><rect x="514" y="742" width="11" height="15" fill="#e6ecf6"/><path d="M516,746h7M516,749h7M516,752h7" stroke="#2b579a" stroke-width=".9"/><text x="509" y="754" font-size="11" font-weight="bold" fill="#fff" text-anchor="middle">W</text>
<rect x="539" y="728" width="48" height="40" fill="#a85a1e"/><rect x="539" y="766" width="48" height="2" fill="#ea5b0c"/>
<circle cx="561" cy="748" r="12" fill="#1ed760"/><path d="M555,744q7-2 13 1M556,748q6-1.500 11 1M557,752q5-1 9 1" fill="none" stroke="#111" stroke-width="2"/>
<rect x="601" y="738" width="23" height="22" fill="#f5ead6"/><path d="M606,741h13v4h-8v4h6v4h-6v5h-5z" fill="#d9892e"/>
<rect x="591" y="766" width="40" height="2" fill="#77b5e6"/>
<!-- tray -->
<circle cx="1125" cy="746" r="3.500" fill="none" stroke="#fff"/><path d="M1117,759q1-6 5-8M1132,759q-1-6-4-8" fill="none" stroke="#fff"/><circle cx="1120" cy="749" r="2.500" fill="none" stroke="#fff"/>
<path d="M1154,752l5-5 5,5" fill="none" stroke="#fff" stroke-width="1.200"/>
<rect x="1178" y="745" width="11" height="9" fill="none" stroke="#fff"/><rect x="1176" y="743" width="4" height="5" fill="#fff"/><path d="M1189,748h2v3h-2" fill="none" stroke="#fff"/>
<path d="M1202,757q0-10 11-11M1205,757q0-7 8-8M1208,757q0-4 5-5" fill="none" stroke="#fff" stroke-width=".9"/>
<path d="M1224,746h3l4-4v14l-4-4h-3zM1233,745q2 4 0 8M1235,743q3 6 0 12" fill="none" stroke="#fff"/>
<text x="1278" y="745" font-size="12" fill="#fff" text-anchor="middle">10:24</text>
<text x="1278" y="761" font-size="12" fill="#fff" text-anchor="middle">23/03/2019</text>
<path d="M1326,742h14v12h-7l-2,3v-3h-5z" fill="#fff"/><path d="M1329,745h8M1329,748h8" stroke="#333"/>
<circle cx="1340" cy="755" r="8" fill="#333" stroke="#888"/><text x="1340" y="759.500" font-size="11" font-weight="bold" fill="#fff" text-anchor="middle">20</text>
</svg>
</body></html>
